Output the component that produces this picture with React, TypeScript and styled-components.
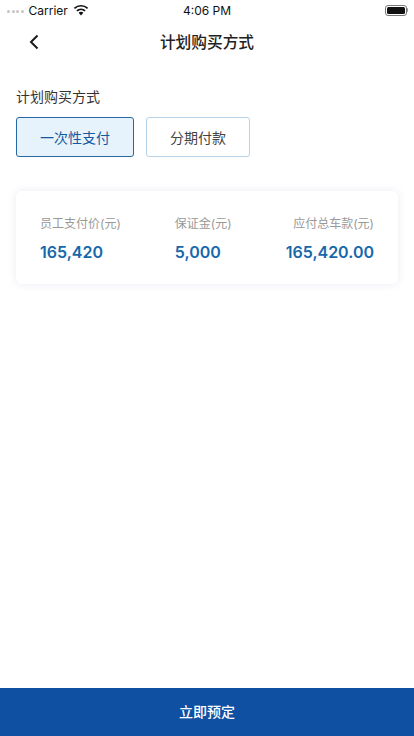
import styled, { createGlobalStyle } from 'styled-components';

const GlobalStyle = createGlobalStyle`
  html, body {
    margin: 0;
    padding: 0;
    background: #fff;
  }
  body {
    font-family: 'Inter', 'Liberation Sans', 'Noto Sans CJK SC', sans-serif;
  }
`;

const amounts = [
  { label: '员工支付价(元)', value: '165,420' },
  { label: '保证金(元)', value: '5,000' },
  { label: '应付总车款(元)', value: '165,420.00', right: true },
];

const App = () => {
  return (
    <Page>
      <GlobalStyle />
      <StatusBar>
        <StatusLeft>
          <Dots>
            <Dot />
            <Dot />
            <Dot />
            <Dot />
          </Dots>
          <span>Carrier</span>
          <svg width="16" height="12" viewBox="0 0 16 12">
            <path d="M8 11.5 L5.6 8.7 A3.6 3.6 0 0 1 10.4 8.7 Z" fill="#111" />
            <path d="M3.9 6.9 A6.2 6.2 0 0 1 12.1 6.9" fill="none" stroke="#111" strokeWidth="1.7" />
            <path d="M1.4 4.3 A9.8 9.8 0 0 1 14.6 4.3" fill="none" stroke="#111" strokeWidth="1.7" />
          </svg>
        </StatusLeft>
        <StatusTime>4:06 PM</StatusTime>
        <Battery>
          <BatteryBody>
            <BatteryFill />
          </BatteryBody>
          <BatteryCap />
        </Battery>
      </StatusBar>

      <NavBar>
        <BackButton>
          <svg width="12" height="16" viewBox="0 0 12 16">
            <path d="M9.5 1.5 L3 8 L9.5 14.5" fill="none" stroke="#1c1c1c" strokeWidth="2" />
          </svg>
        </BackButton>
        <NavTitle>计划购买方式</NavTitle>
      </NavBar>

      <Content>
        <SectionLabel>计划购买方式</SectionLabel>
        <Options>
          <Option $active>一次性支付</Option>
          <Option>分期付款</Option>
        </Options>

        <Card>
          {amounts.map((item) => (
            <Amount key={item.label} $right={item.right}>
              <AmountLabel>{item.label}</AmountLabel>
              <AmountValue>{item.value}</AmountValue>
            </Amount>
          ))}
        </Card>
      </Content>

      <SubmitBar>立即预定</SubmitBar>
    </Page>
  );
};

export default App;

const Page = styled.div`
  width: 414px;
  height: 736px;
  display: flex;
  flex-direction: column;
  background: #fff;
  overflow: hidden;
`;

const StatusBar = styled.div`
  height: 20px;
  display: grid;
  grid-template-columns: 1fr auto 1fr;
  align-items: center;
  padding: 0 6px;
  font-size: 12px;
  color: #111;
`;

const StatusLeft = styled.div`
  display: flex;
  align-items: center;
  gap: 5px;
`;

const Dots = styled.div`
  display: flex;
  gap: 1.5px;
  margin-top: 3px;
  margin-left: 1px;
`;

const Dot = styled.i`
  width: 3px;
  height: 3px;
  border-radius: 50%;
  background: #c4c4c4;
`;

const StatusTime = styled.div`
  font-weight: 400;
`;

const Battery = styled.div`
  display: flex;
  align-items: center;
  justify-content: flex-end;
`;

const BatteryBody = styled.div`
  width: 22px;
  height: 11px;
  box-sizing: border-box;
  padding: 1px;
  border: 1px solid #777;
  border-radius: 3px;
`;

const BatteryFill = styled.div`
  height: 100%;
  background: #111;
  border-radius: 1.5px;
`;

const BatteryCap = styled.div`
  width: 1.5px;
  height: 4px;
  background: #999;
  border-radius: 0 1px 1px 0;
`;

const NavBar = styled.div`
  position: relative;
  height: 44px;
  margin-top: -1px;
  display: flex;
  align-items: center;
  justify-content: center;
`;

const BackButton = styled.div`
  position: absolute;
  left: 28px;
  top: 15px;
  display: flex;
`;

const NavTitle = styled.div`
  font-size: 15.7px;
  font-weight: 500;
  color: #222;
`;

const Content = styled.div`
  flex: 1;
  padding: 24px 16px 0;
`;

const SectionLabel = styled.div`
  font-size: 14px;
  line-height: 20px;
  color: #333;
`;

const Options = styled.div`
  display: flex;
  gap: 12px;
  margin-top: 10px;
`;

const Option = styled.div<{ $active?: boolean }>`
  box-sizing: border-box;
  height: 40px;
  padding: 0 23px;
  display: flex;
  align-items: center;
  font-size: 14px;
  border-radius: 3px;
  border: 1px solid ${(p) => (p.$active ? '#2667a6' : '#b5d2ea')};
  background: ${(p) => (p.$active ? '#e6f3fd' : '#fff')};
  color: ${(p) => (p.$active ? '#14589f' : '#444')};
`;

const Card = styled.div`
  margin: 34px 0 0;
  width: 382px;
  box-sizing: border-box;
  height: 93px;
  padding: 2px 24px 0;
  display: flex;
  justify-content: space-between;
  align-items: center;
  border-radius: 6px;
  background: #fff;
  box-shadow: 0 0 8px rgba(40, 60, 120, 0.1);
`;

const Amount = styled.div<{ $right?: boolean }>`
  display: flex;
  flex-direction: column;
  gap: 10px;
  align-items: ${(p) => (p.$right ? 'flex-end' : 'flex-start')};
`;

const AmountLabel = styled.div`
  font-size: 12px;
  line-height: 16px;
  color: #999;
`;

const AmountValue = styled.div`
  font-size: 16px;
  line-height: 20px;
  font-weight: 600;
  color: #1668ab;
`;

const SubmitBar = styled.div`
  height: 48px;
  padding-bottom: 2px;
  box-sizing: border-box;
  display: flex;
  align-items: center;
  justify-content: center;
  font-size: 14px;
  font-weight: 500;
  color: #fff;
  background: #0f50a3;
`;
